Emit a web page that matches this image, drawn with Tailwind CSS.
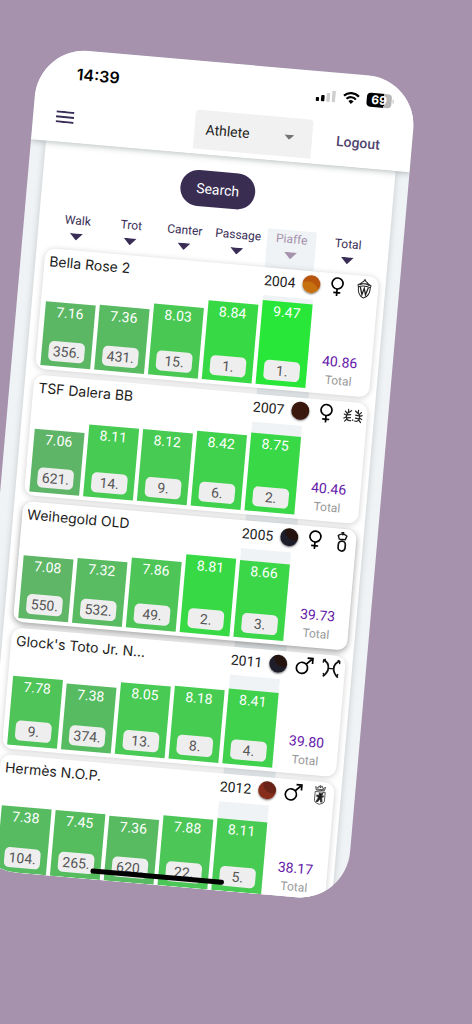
<!DOCTYPE html>
<html lang="en">
<head>
<meta charset="utf-8">
<meta name="viewport" content="width=device-width, initial-scale=1">
<title>Athlete ranking</title>
<script src="https://cdn.jsdelivr.net/npm/@tailwindcss/browser@4"></script>
</head>
<body class="min-h-screen overflow-hidden bg-[#a692ad] font-[Roboto,sans-serif] text-[#1c1c1c]">
<main class="origin-top-left rotate-5 pt-[43px] pr-[49px] pl-[43px]">
  <div class="relative flex aspect-[380/825] flex-col overflow-hidden rounded-[50px] bg-[#eff3f5]">

    <header class="relative z-10 h-[93px] shrink-0 bg-white shadow-[0_1px_6px_rgba(40,60,60,0.35)]">
      <div class="flex h-[47px] items-center justify-between pr-[22px] pl-10 text-black">
        <time class="font-[Inter,sans-serif] text-base font-semibold">14:39</time>
        <div class="flex items-center gap-[7px]">
          <svg class="h-3 w-5" viewBox="0 0 20 12" role="img" aria-label="Signal">
            <rect x="0" y="8" width="3.4" height="4" rx="1"/><rect x="5.4" y="5.5" width="3.4" height="6.5" rx="1"/>
            <rect x="10.8" y="3" width="3.4" height="9" rx="1" fill="#cfcfcf"/><rect x="16.2" y="0" width="3.4" height="12" rx="1" fill="#cfcfcf"/>
          </svg>
          <svg class="h-3 w-[17px]" viewBox="0 0 17 12" role="img" aria-label="Wi-Fi">
            <path d="M1 4.2a10.6 10.6 0 0 1 15 0" fill="none" stroke="#000" stroke-width="2.3"/>
            <path d="M3.8 7.2a6.6 6.6 0 0 1 9.4 0" fill="none" stroke="#000" stroke-width="2.2"/>
            <path d="M8.500 12 5.900 9.300a3.700 3.700 0 0 1 5.200 0z"/>
          </svg>
          <div class="flex items-center gap-px">
            <div class="flex h-[14px] w-[25px] items-center justify-center rounded-[4px] bg-linear-to-r from-black from-69% to-[#b8b8b8] to-69% font-[Inter,sans-serif] text-xs font-bold text-white">69</div>
            <div class="h-1 w-px rounded-r bg-[#b8b8b8]"></div>
          </div>
        </div>
      </div>
      <div class="flex h-[42px] items-center pr-8 pl-[23px]">
        <button class="block" aria-label="Menu">
          <svg class="h-3 w-[18px]" viewBox="0 0 18 12"><path d="M0 1h18M0 6h18M0 11h18" stroke="#392d55" stroke-width="2"/></svg>
        </button>
        <div class="relative ml-auto w-[118px]">
          <select aria-label="Ranking type" class="h-[39px] w-full appearance-none rounded-t-[4px] bg-[#f1f1f1] pl-[11px] text-sm text-[#242424]"><option>Athlete</option><option>Horse</option></select>
          <svg class="pointer-events-none absolute top-[17px] right-[18px] h-[5px] w-[10px]" viewBox="0 0 10 5"><path d="M0 0h10L5 5z" fill="#737373"/></svg>
        </div>
        <a href="#" class="ml-6 text-sm font-medium text-[#51456e]">Logout</a>
      </div>
    </header>

    <section class="mr-[14px] ml-[15px] flex min-h-0 flex-1 flex-col bg-white pt-4 shadow-[0_0_7px_rgba(0,0,0,0.18)]">
      <button class="h-9 w-[75px] shrink-0 self-center rounded-full bg-[#392d52] text-sm text-white">Search</button>
      <div id="sort" class="mt-4 grid shrink-0 grid-cols-[repeat(5,minmax(0,50fr))_minmax(0,56fr)] gap-1 pr-[13px] pl-[14px]"></div>
      <div class="relative shrink-0">
        <div class="absolute inset-y-0 left-[232px] w-[52px] bg-[#eaeff1]"></div>
        <ul id="list" class="relative flex flex-col gap-[6px] pr-[7px] pl-[9px]"></ul>
      </div>
    </section>

    <div class="absolute bottom-[6px] left-1/2 h-[5px] w-[134px] -translate-x-1/2 rounded-full bg-black"></div>
  </div>
</main>

<script>
const female = '<svg class="size-5" viewBox="0 0 20 20" fill="none" stroke="#000" stroke-width="1.700" role="img" aria-label="Mare"><circle cx="10" cy="7" r="5.500"/><path d="M10 12.500v7M6.500 16.200h7"/></svg>';
const male = '<svg class="size-5" viewBox="0 0 20 20" fill="none" stroke="#000" stroke-width="1.700" role="img" aria-label="Stallion"><circle cx="8" cy="12" r="5.600"/><path d="M12 8l6-6M12.800 1.800H18.200V7.200"/></svg>';
const brands = {
  w: '<svg class="size-5" viewBox="0 0 20 20" fill="none" stroke="#222" stroke-width="1"><path d="M4 8.500 3.500 6.500 6 5l1.500-1.500 1.500-1L10 .7l1 1.800 1.500 1L14 5l2.500 1.500L16 8.500M5 6.500q5-3 10 0M7 4.800h6M4 8.500c0 5 2 9.500 6 10.800 4-1.300 6-5.800 6-10.800q-6-2.500-12 0z"/><path d="M6 8.500 8.200 16 10 9.500 11.800 16 14 8.500" stroke-width="1.300"/></svg>',
  antlers: '<svg class="size-5" viewBox="0 0 20 20" fill="none" stroke="#222" stroke-width="1.200" stroke-linecap="round"><path d="M8 15.500C4.500 16.500 2.800 13 3.500 10.500S6 7.500 5 4.500M3.500 10.500 1 9.500M3.600 12 1 13.500M4.200 9 2 6.500M5.500 7.500 8 5.500M4.600 10 7.500 9.500M4 13l3.500-.5M3.800 14.500 2 16.500"/><path d="M12 15.500c3.500 1 5.200-2.500 4.500-5S14 7.500 15 4.500M16.500 10.500 19 9.500M16.400 12l2.600 1.500M15.800 9 18 6.500M14.500 7.500 12 5.500M15.400 10l-2.900-.5M16 13l-3.500-.5M16.200 14.500l1.800 2M10 14.500v.5"/></svg>',
  crown: '<svg class="size-5" viewBox="0 0 20 20" fill="none" stroke="#111" stroke-width="1.400"><path d="M7 7.500 5.700 4 7.500 2.700 10 2l2.500.7L14.300 4 13 7.500zM10 0v3.500M8.500 1h3" /><rect x="6.500" y="9.200" width="7" height="10" rx="3.500" stroke-width="1.700"/></svg>',
  horns: '<svg class="size-5" viewBox="0 0 20 20" fill="none" stroke="#111" stroke-width="1.800"><path d="M1.500 2C5.500 3.500 7.300 7 7.300 10S6 15.500 2.500 18.500M18.500 2C14.500 3.500 12.700 7 12.700 10S14 15.500 17.500 18.500"/><path d="M7.300 10.200h5.400M4 1.200 2 2.800 1.700 5M16 1.200l2 1.600.3 2.200M3.800 17.800 2.500 15.200M16.200 17.800l1.300-2.600" stroke-width="1.400"/></svg>',
  shield: '<svg class="size-5" viewBox="0 0 20 20" fill="none" stroke="#333" stroke-width="1"><path d="M6 5.500 5 2l2.500 1.500L8.500 1 10 3l1.500-2 1 2.500L15 2l-1 3.500zM10 0v3M6 4.500h8M5 7h10v9q0 2-5 3.500Q5 18 5 16z" stroke-width=".8"/><path d="M12.800 8 11 9 9.500 8.200 9 9.800l.8 1L7 10.500v1l2 1-.8 1.500-1.400 2.800h1.500l1.900-2.800 1 1v1.800h1.400l-.4-3-.8-1.300 2-.8v-1l-1.800.2z" fill="#111"/></svg>'
};
const cols = ['Walk', 'Trot', 'Canter', 'Passage', 'Piaffe', 'Total'];
const rows = [
  { name: 'Bella Rose 2', year: 2004, coat: 'bg-[radial-gradient(circle_at_30%_100%,#c6700f_50%,#b9560e_54%)]', sex: female, brand: 'w', total: '40.86', s: [['7.16', 356], ['7.36', 431], ['8.03', 15], ['8.84', 1], ['9.47', 1]] },
  { name: 'TSF Dalera BB', year: 2007, coat: 'bg-[#3a180e]', sex: female, brand: 'antlers', total: '40.46', s: [['7.06', 621], ['8.11', 14], ['8.12', 9], ['8.42', 6], ['8.75', 2]] },
  { name: 'Weihegold OLD', year: 2005, coat: 'bg-[radial-gradient(circle_at_80%_10%,#24130f_44%,#1e1e2a_48%)]', sex: female, brand: 'crown', total: '39.73', s: [['7.08', 550], ['7.32', 532], ['7.86', 49], ['8.81', 2], ['8.66', 3]] },
  { name: "Glock's Toto Jr. N…", year: 2011, coat: 'bg-[radial-gradient(circle_at_80%_10%,#24130f_44%,#1e1e2a_48%)]', sex: male, brand: 'horns', total: '39.80', s: [['7.78', 9], ['7.38', 374], ['8.05', 13], ['8.18', 8], ['8.41', 4]] },
  { name: 'Hermès N.O.P.', year: 2012, coat: 'bg-[radial-gradient(circle_at_80%_10%,#692417_44%,#872d1b_48%)]', sex: male, brand: 'shield', total: '38.17', s: [['7.38', 104], ['7.45', 265], ['7.36', 620], ['7.88', 22], ['8.11', 5]] }
];
const mix = (a, b, t) => Math.round(a + (b - a) * t);
const tone = v => { const t = (v - 7) / 2.5; return `rgb(${mix(96, 40, t)} ${mix(180, 232, t)} ${mix(104, 56, t)})`; };

document.getElementById('sort').innerHTML = cols.map(c => `
  <button class="flex h-[39px] flex-col items-center gap-[5px] pt-px text-xs ${c === 'Piaffe' ? 'bg-[#eff3f5] text-[#a692ad]' : 'text-[#392d55]'}">
    <span>${c}</span>
    <svg class="h-[7px] w-[13px]" viewBox="0 0 13 7" fill="currentColor"><path d="M0 0h13L6.500 7z"/></svg>
  </button>`).join('');

document.getElementById('list').innerHTML = rows.map((r, n) => `
  <li class="rounded-[10px] bg-white pb-1 ${n === 2 ? 'shadow-[0_2px_6px_rgba(0,0,0,0.4)]' : 'shadow-[0_1px_6px_rgba(0,0,0,0.2)]'}">
    <div class="flex h-7 items-center gap-[7px] pr-1 pb-[2px] pl-[5px]">
      <h2 class="flex-1 truncate font-[Inter,sans-serif] text-sm">${r.name}</h2>
      <span class="text-sm">${r.year}</span>
      <span class="size-[18px] rounded-full shadow-[0_1px_2px_rgba(0,0,0,0.5)] ${r.coat}"></span>
      ${r.sex}${brands[r.brand]}
    </div>
    <div class="grid h-[89px] grid-cols-[repeat(5,minmax(0,50fr))_minmax(0,56fr)] gap-1 pr-1 pl-[5px]">
      ${r.s.map(([v, k], i) => `
      <div class="flex flex-col justify-end ${i === 4 ? 'bg-[#eff3f5]' : ''}">
        <div class="flex flex-col items-center justify-between pb-[5px] text-sm text-white" style="height:${v * 10}%;background:${tone(v)}">
          <span>${v}</span>
          <span class="flex h-5 w-9 items-center justify-center rounded-[5px] bg-[#eeeeee] text-[#555555]">${k}.</span>
        </div>
      </div>`).join('')}
      <div class="flex flex-col items-center justify-end gap-[3px] pb-[2px]">
        <strong class="text-sm leading-4 font-normal text-[#6418a8]">${r.total}</strong>
        <span class="text-xs leading-4 text-[#999999]">Total</span>
      </div>
    </div>
  </li>`).join('');
</script>
</body>
</html>
